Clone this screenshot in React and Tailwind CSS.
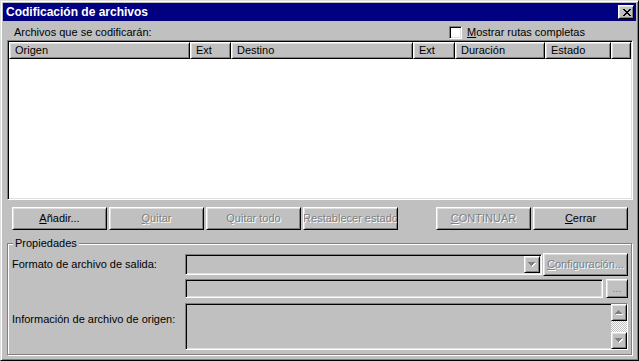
import React from "react";

const raised =
  "border border-t-white border-l-white border-r-black border-b-black shadow-[inset_1px_1px_0_#dfdfdf,inset_-1px_-1px_0_#808080]";
const sunken =
  "border border-t-[#808080] border-l-[#808080] border-r-white border-b-white shadow-[inset_1px_1px_0_#000,inset_-1px_-1px_0_#dfdfdf]";
const dimText = "text-[#808080] [text-shadow:1px_1px_0_#fff]";

const closeRows = [
  [[0, 2], [6, 2]],
  [[1, 2], [5, 2]],
  [[2, 4]],
  [[3, 2]],
  [[2, 4]],
  [[1, 2], [5, 2]],
  [[0, 2], [6, 2]],
];

const CloseGlyph = () => (
  <svg width="8" height="7" viewBox="0 0 8 7" shapeRendering="crispEdges">
    {closeRows.map((row, y) =>
      row.map(([x, w]) => <rect key={`${y}-${x}`} x={x} y={y} width={w} height="1" fill="#000" />)
    )}
  </svg>
);

// pixel triangle, 7 wide 4 tall
const Arrow = ({ up }) => {
  const rows = [
    [0, 7],
    [1, 5],
    [2, 3],
    [3, 1],
  ];
  const list = up ? [...rows].reverse() : rows;
  return (
    <svg width="8" height="5" viewBox="0 0 8 5" shapeRendering="crispEdges">
      {list.map(([x, w], y) => (
        <rect key={`s${y}`} x={x + 1} y={y + 1} width={w} height="1" fill="#fff" />
      ))}
      {list.map(([x, w], y) => (
        <rect key={`a${y}`} x={x} y={y} width={w} height="1" fill="#808080" />
      ))}
    </svg>
  );
};

const Btn = ({ children, disabled, w = "w-[95px]", className = "" }) => (
  <button
    className={`${raised} ${w} shrink-0 h-[23px] flex items-center justify-center whitespace-nowrap overflow-hidden bg-[#c0c0c0] ${
      disabled ? dimText : "text-black"
    } ${className}`}
  >
    {children}
  </button>
);

const columns = [
  { label: "Origen", w: "w-[181px]" },
  { label: "Ext", w: "w-[41px]" },
  { label: "Destino", w: "w-[182px]" },
  { label: "Ext", w: "w-[42px]" },
  { label: "Duración", w: "w-[90px]" },
  { label: "Estado", w: "w-[66px]" },
  { label: "", w: "flex-1" },
];

export default function App() {
  return (
    <div className="w-[639px] h-[361px] bg-[#c0c0c0] border border-t-[#dfdfdf] border-l-[#dfdfdf] border-r-black border-b-black shadow-[inset_1px_1px_0_#fff,inset_-1px_-1px_0_#808080] p-[2px] flex flex-col text-[11px] leading-[13px] text-black font-['Liberation_Sans',Arial,sans-serif] select-none">
      <div className="h-[18px] bg-[#000080] flex items-center pl-[3px] pr-[2px]">
        <span className="font-bold text-white text-[12px]">Codificación de archivos</span>
        <button className={`${raised} ml-auto w-[16px] h-[14px] bg-[#c0c0c0] flex items-center justify-center pl-[1px]`}>
          <CloseGlyph />
        </button>
      </div>

      <div className="flex flex-col pl-[4px] pr-[3px]">
        <div className="h-[19px] flex items-center pt-[3px]">
          <span className="pl-[7px] w-[442px] shrink-0">Archivos que se codificarán:</span>
          <span className={`${sunken} w-[13px] h-[13px] bg-white shrink-0`} />
          <span className="ml-[5px]">
            <u>M</u>ostrar rutas completas
          </span>
        </div>

        <div className={`${sunken} h-[160px] bg-white p-[1px] flex flex-col`}>
          <div className="flex h-[17px]">
            {columns.map((c, i) => (
              <div
                key={i}
                className={`${raised} ${c.w} shrink-0 bg-[#c0c0c0] flex items-center pl-[5px] whitespace-nowrap overflow-hidden`}
              >
                {c.label}
              </div>
            ))}
          </div>
        </div>

        <div className="flex mt-[7px] pl-[5px] pr-[5px] gap-[2px]">
          <Btn>
            <u>A</u>ñadir...
          </Btn>
          <Btn disabled>
            <u>Q</u>uitar
          </Btn>
          <Btn disabled>Quitar todo</Btn>
          <Btn disabled>Restablecer estado</Btn>
          <div className="flex-1" />
          <Btn disabled>
            <u>C</u>ONTINUAR
          </Btn>
          <Btn>
            <u>C</u>errar
          </Btn>
        </div>

        <div className="relative mt-[13px] mr-[1px] h-[112px] border border-[#808080] shadow-[inset_1px_1px_0_#fff,1px_1px_0_#fff] flex flex-col pl-[4px] pr-[3px] pt-[9px]">
          <span className="absolute left-[5px] top-[-7px] bg-[#c0c0c0] px-[2px]">Propiedades</span>

          <div className="flex items-center h-[23px]">
            <span className="w-[173px] shrink-0">Formato de archivo de salida:</span>
            <div className={`${sunken} w-[357px] shrink-0 h-[21px] p-[1px] flex justify-end`}>
              <div className={`${raised} w-[16px] h-[17px] flex items-center justify-center`}>
                <Arrow />
              </div>
            </div>
            <Btn disabled w="w-[85px]" className="ml-[1px]">
              <u>C</u>onfiguración...
            </Btn>
          </div>

          <div className="flex items-center h-[19px] mt-[3px]">
            <span className="w-[173px] shrink-0" />
            <div className={`${sunken} w-[418px] shrink-0 h-[19px]`} />
            <button className={`${raised} ml-[3px] w-[22px] shrink-0 h-[19px] bg-[#c0c0c0] text-[#808080] flex items-end justify-center pb-[3px] leading-none`}>
              ...
            </button>
          </div>

          <div className="flex mt-[5px]">
            <span className="w-[173px] shrink-0 mt-[10px]">Información de archivo de origen:</span>
            <div className={`${sunken} w-[443px] shrink-0 h-[47px] flex justify-end`}>
              <div className="w-[16px] flex flex-col">
                <div className={`${raised} h-[17px] flex items-center justify-center`}>
                  <Arrow up />
                </div>
                <div className="flex-1 bg-[image:repeating-conic-gradient(#fff_0_25%,#c0c0c0_0_50%)] bg-[length:2px_2px]" />
                <div className={`${raised} h-[17px] flex items-center justify-center`}>
                  <Arrow />
                </div>
              </div>
            </div>
          </div>
        </div>
      </div>
    </div>
  );
}
